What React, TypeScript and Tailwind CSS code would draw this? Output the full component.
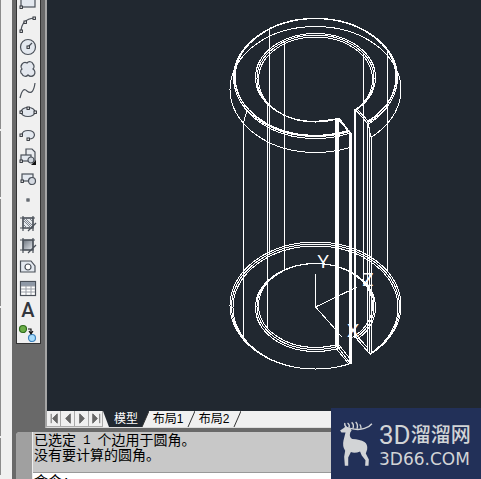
import type { ReactNode } from 'react';

interface Tool {
  label: string;
  icon: ReactNode;
}

const grip = (x: number, y: number) => (
  <rect key={`${x},${y}`} x={x - 1} y={y - 1} width="2.4" height="2.4" fill="#fff" stroke="#2b2f36" strokeWidth="1" />
);

const cloud =
  'M-6 0 A4 4 0 0 1 -1 -6 A3.500 3.500 0 0 1 5 -5 A3.500 3.500 0 0 1 5 0 A4 4 0 0 1 6 6 A4 4 0 0 1 0 6 A3.500 3.500 0 0 1 -6 5 A3 3 0 0 1 -6 0 Z';

const tools: Tool[] = [
  { label: 'Rectangle', icon: <><rect x="-7" y="-6" width="14" height="10" fill="#e3e8ef" />{grip(-7, 4)}{grip(7, -6)}</> },
  { label: 'Arc', icon: <><path d="M-7 6 Q-6 -6 6 -7" />{grip(-7, 6)}{grip(-3, -3)}{grip(6, -7)}</> },
  { label: 'Circle', icon: <><circle r="7.500" fill="#e3e8ef" /><path d="M0 0 L4 -4" />{grip(0, 0)}</> },
  { label: 'Revision cloud', icon: <path d={cloud} fill="#e3e7ee" /> },
  { label: 'Spline', icon: <path d="M-8 7 C-6 -1 -4 -3 -1 0 C4 4 6 -1 7 -8" /> },
  { label: 'Ellipse', icon: <><ellipse cy="-1" rx="7" ry="4.5" fill="#e3e8ef" />{grip(-7, -1)}{grip(0, -5)}{grip(7, -1)}</> },
  { label: 'Ellipse arc', icon: <><path d="M-6 0 C-6 -6 6 -6 6.500 0 C6 3 4 4 1 4" fill="#e3e8ef" />{grip(-7, 0)}{grip(0, 4)}</> },
  {
    label: 'Insert block',
    icon: (
      <>
        <path d="M-2 -2 V-8 H4 L7 -5 V4" fill="#e8ebef" />
        <rect x="-7" y="-2" width="10" height="6" fill="#e3e8ef" />
        <circle cx="3" cy="3" r="3" fill="#cfd5dd" />
        {grip(-7, 4)}
        <path d="M8 3 V8 H3 Z" fill="#111" stroke="none" />
      </>
    ),
  },
  { label: 'Make block', icon: <><rect x="-6" y="-5" width="11" height="7" fill="#e3e8ef" /><circle cx="4" cy="2" r="3.500" fill="#d5dae2" />{grip(-6, 2)}</> },
  { label: 'Point', icon: <rect x="-1" y="-2" width="2" height="2" fill="#fff" /> },
  {
    label: 'Hatch',
    icon: (
      <>
        <rect x="-5" y="-5" width="10" height="10" fill="#e6e9ed" />
        <path d="M-8 -5 H7 M-8 5 H4 M-5 -7 V8 M5 -7 V8" />
        <path d="M-4 -2 L3 5 M-4 2 L-1 5 M-2 -4 L4 2 M2 -4 L4 -2 M-4 -4 L4 4" strokeWidth="1" stroke="#7e848d" />
        <path d="M0 8 L8 0" />
      </>
    ),
  },
  {
    label: 'Gradient',
    icon: (
      <>
        <rect x="-5" y="-5" width="10" height="10" fill="url(#toolGradient)" />
        <path d="M-8 -5 H7 M-8 5 H4 M-5 -7 V8 M5 -7 V8 M0 8 L8 0" />
      </>
    ),
  },
  { label: 'Region', icon: <><path d="M-7.500 -6 H3 L7 -1 V5 H-7.500 Z" fill="#e3e8ef" /><circle cy="0" r="3" fill="#fff" /></> },
  {
    label: 'Table',
    icon: (
      <>
        <rect x="-7.500" y="-7.500" width="15" height="14" fill="#fff" />
        <rect x="-7" y="-7" width="14" height="4" fill="#8e98a6" stroke="none" />
        <path d="M-7 -3 H7 M-7 0 H7 M-7 3 H7 M-2 -3 V6 M3 -3 V6" strokeWidth="1" stroke="#9a9fa7" />
      </>
    ),
  },
  { label: 'Multiline text', icon: null },
  {
    label: 'Add selected',
    icon: (
      <>
        <circle cx="-5" cy="-4" r="3.500" fill="#6cae48" stroke="#2f6b1c" />
        <circle cx="4" cy="5" r="3.500" fill="#a9dcfb" stroke="#3b82bd" />
        <path d="M0 -4 H3 V0 M1 -2 L3 1 L5 -2" stroke="#111" />
      </>
    ),
  },
];

function DrawToolbar() {
  return (
    <div className="-mt-2.5 flex w-[25px] flex-col self-start border border-[#333] bg-[#f0f0f0]">
      {tools.map((tool) => (
        <button key={tool.label} aria-label={tool.label} className="flex h-[22px] w-[22px] items-center justify-center">
          {tool.icon ? (
            <svg width="22" height="22" viewBox="-11 -12 22 22" fill="none" stroke="#4a5059" strokeWidth="1.200">
              <defs>
                <linearGradient id="toolGradient" x1="0" y1="0" x2="1" y2="1">
                  <stop offset="0" stopColor="#6c737d" />
                  <stop offset="1" stopColor="#e4e8ed" />
                </linearGradient>
              </defs>
              {tool.icon}
            </svg>
          ) : (
            <span className="font-['Roboto'] text-xl leading-none font-medium text-[#33373d]">A</span>
          )}
        </button>
      ))}
    </div>
  );
}

// Slotted bushing: top ring, bottom ring, the vertical edges between them and the UCS icon
function Wireframe() {
  return (
    <svg
      className="block max-w-none"
      width="434"
      height="411"
      viewBox="47 0 434 411"
      fill="none"
      stroke="#fff"
      strokeWidth="1"
      shapeRendering="crispEdges"
    >
      <defs>
        <clipPath id="topSlot">
          <path clipRule="evenodd" d="M47 0 H481 V411 H47 Z M337 116 L350 131 V175 H371 V137 L368 123 L355 108 Z" />
        </clipPath>
        <clipPath id="bottomSlot">
          <path clipRule="evenodd" d="M47 0 H481 V411 H47 Z M337 342 L351 362 V385 H370 V354 L355 337 Z" />
        </clipPath>
      </defs>

      {/* top ring */}
      <g clipPath="url(#topSlot)">
        <ellipse cx="315.500" cy="89.500" rx="85.500" ry="63" />
        <ellipse cx="315.500" cy="77" rx="80.500" ry="58.500" strokeWidth="1.500" />
        <ellipse cx="315.500" cy="77.500" rx="82" ry="59" />
        <ellipse cx="315.500" cy="78.500" rx="81.500" ry="60" />
        <ellipse cx="315.500" cy="77.500" rx="60" ry="44" />
        <ellipse cx="315.500" cy="78.500" rx="58.500" ry="43.500" />
        <ellipse cx="315.500" cy="79.500" rx="57" ry="42.500" />
      </g>
      <path d="M314 121.500 L337 119" strokeWidth="1" />
      <path d="M337 118 L350 133 M339 118 L351 134 M355 109 L368 124 M357 109 L369 122 M368 124 L371 137" />

      {/* bottom ring */}
      <g clipPath="url(#bottomSlot)">
        <ellipse cx="315.500" cy="305.500" rx="85.500" ry="63.500" />
        <ellipse cx="315.500" cy="306.500" rx="84" ry="62.500" />
        <ellipse cx="315.500" cy="307.500" rx="82.500" ry="61.500" />
        <ellipse cx="315.500" cy="307.500" rx="60" ry="44" />
        <ellipse cx="315.500" cy="306.500" rx="58.500" ry="43" />
        <ellipse cx="315.500" cy="305.500" rx="57" ry="42" />
      </g>
      <path d="M337 346 L350 363 M339 345 L351 360 M335 347 L348 363 M355 337 L370 354 M357 336 L367 347" />

      {/* vertical edges */}
      <path d="M337 118 V346" strokeWidth="4" />
      <path d="M350.500 133 V364" strokeWidth="3" />
      <path d="M355 109 V338" strokeWidth="2" />
      <path d="M367.500 123 V350 M369.500 127 V354 M371.500 137 V354" />
      <path d="M363.500 54 V282 M387.500 51 V272 M269.500 30 V255 M284.500 42 V270 M243.500 123 V338 M267.500 105 V329" />
      <path d="M247 110 L243.500 123" />

      {/* UCS axes */}
      <path d="M315.500 274 V307 L357 287 M315.500 307 L336 330 M338 333 L342 337" />
      <g fill="#fff" stroke="none" textAnchor="middle" className="font-['Lato'] text-lg">
        <text x="323" y="268">Y</text>
        <text x="353" y="337">X</text>
        <text x="368" y="286">Z</text>
      </g>
    </svg>
  );
}

const navArrows = [
  { label: 'First tab', d: 'M4.500 3 V13 M11 3 V13 L6 8 Z' },
  { label: 'Previous tab', d: 'M10 3 V13 L5 8 Z' },
  { label: 'Next tab', d: 'M5 3 V13 L10 8 Z' },
  { label: 'Last tab', d: 'M4 3 V13 L9 8 Z M11.500 3 V13' },
];

function Slant({ active }: { active?: boolean }) {
  return (
    <svg width="8" height="16" viewBox="0 0 8 16">
      {active && <path d="M0 0 H8 L1 16 H0 Z" fill="#212830" />}
      <path d="M8 0 L1 16" stroke="#333" strokeWidth="1" />
    </svg>
  );
}

function LayoutTabs() {
  return (
    <div className="flex h-4 bg-[#f0f0f0] font-['Liberation_Sans','Noto_Sans_CJK_SC',sans-serif] text-xs leading-4 text-black">
      {navArrows.map((arrow) => (
        <button key={arrow.label} aria-label={arrow.label} className="w-3.5 border-r border-b border-[#aaa]">
          <svg width="14" height="15" viewBox="0 0 15 16" fill="#666" stroke="#666" strokeWidth="1">
            <path d={arrow.d} />
          </svg>
        </button>
      ))}
      <svg width="8" height="16" viewBox="0 0 8 16">
        <path d="M0 0 H8 V16 H6 Z" fill="#212830" />
      </svg>
      <button className="w-[30px] bg-[#212830] text-white">模型</button>
      <Slant active />
      <button className="w-[38px]">布局1</button>
      <Slant />
      <button className="w-[38px]">布局2</button>
      <Slant />
    </div>
  );
}

function CommandWindow() {
  return (
    <div className="flex h-[47px] overflow-hidden rounded-tl bg-[#c8c8c8]">
      <div className="w-4 shrink-0 bg-[#a0a0a0] px-0.5 pt-[3px]">
        <div className="h-1 w-3 bg-[radial-gradient(#222_40%,transparent_45%)] bg-[size:2px_2px]" />
      </div>
      <div className="flex-1 border-l border-[#eee] font-['Liberation_Mono','Noto_Sans_CJK_SC',monospace] text-sm leading-[15px] whitespace-nowrap text-black">
        <div className="h-10 px-px pt-0.5">
          <p className="flex h-[15px]">
            已选定<span className="text-xs leading-[15px] whitespace-pre"> 1 </span>个边用于圆角。
          </p>
          <p className="h-[15px]">没有要计算的圆角。</p>
        </div>
        <div className="flex border-t border-[#999] bg-white px-px pt-0.5">
          <label htmlFor="command">命令:</label>
          <input id="command" className="h-4 min-w-0 flex-1 outline-none" />
        </div>
      </div>
    </div>
  );
}

function Watermark() {
  return (
    <div className="absolute right-0 bottom-0 flex h-[71px] w-[150px] items-center gap-1.5 bg-[#223058] pl-2 text-[#d2d4d6]">
      <svg width="34" height="46" viewBox="43 64 100 136" fill="#d2d4d6">
        <path d="M46 92 L57 85 L62 80 L76 84 L80 92 L76 98 Q72 112 82 117 Q105 118 118 126 Q128 132 126 148 L122 160 L131 178 L130 196 L120 196 L121 180 L110 166 L105 154 Q90 160 78 156 L70 172 L70 196 L60 196 L58 170 L61 152 Q52 140 56 122 L62 98 L50 98 Z" />
        <g fill="none" stroke="#d2d4d6" strokeWidth="4">
          <path d="M66 84 Q58 78 60 70 M72 84 Q76 76 68 70" />
          <path d="M76 86 Q100 92 118 86 Q132 82 140 72" />
          <path d="M84 86 Q88 74 80 68 M96 87 Q100 74 92 67 M108 87 Q108 78 104 74" />
        </g>
      </svg>
      <div className="flex flex-col gap-0.5 whitespace-nowrap">
        <div className="flex items-center leading-7">
          <span className="font-['Roboto'] text-[26px]">3D</span>
          <span className="font-['Liberation_Sans','Noto_Sans_CJK_SC',sans-serif] text-xl leading-7 font-medium">溜溜网</span>
        </div>
        <div className="font-['DejaVu_Sans'] text-[17px] leading-4">3D66.COM</div>
      </div>
    </div>
  );
}

export default function App() {
  return (
    <div className="relative flex h-screen overflow-hidden bg-[#696969]">
      {/* Docked palette edge */}
      <div className="flex w-3 shrink-0 flex-col gap-0.5 bg-[#f0f0f0]">
        <div className="h-[129px] w-px bg-[#8c8c8c]" />
        <div className="h-[66px] w-px bg-[#8c8c8c]" />
        <div className="h-[107px] w-px bg-[#8c8c8c]" />
        <div className="h-[128px] w-px bg-[#8c8c8c]" />
        <div className="h-[37px] w-px bg-[#8c8c8c]" />
      </div>

      <div className="flex min-w-0 flex-1 flex-col gap-1 pl-1">
        <div className="flex min-h-0 flex-1">
          <DrawToolbar />
          <div className="ml-1 flex min-w-0 flex-1 flex-col border-b border-l-2 border-[#ddd] border-l-[#a5a5a5]">
            <div className="min-h-0 flex-1 overflow-hidden bg-[#212830]">
              <Wireframe />
            </div>
            <LayoutTabs />
          </div>
        </div>
        <CommandWindow />
      </div>

      <Watermark />
    </div>
  );
}
